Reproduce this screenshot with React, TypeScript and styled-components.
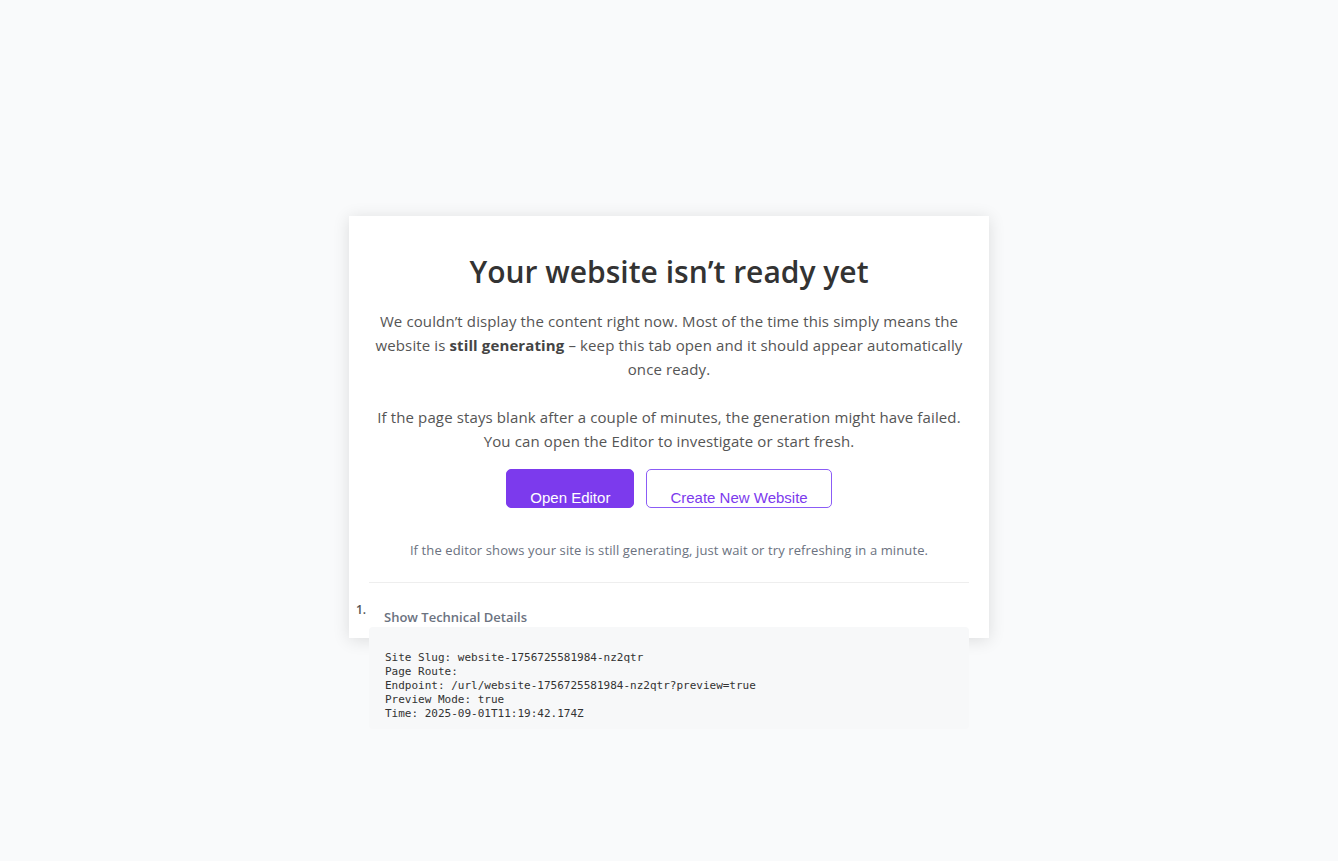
import React from "react";
import styled, { createGlobalStyle } from "styled-components";

const GlobalStyle = createGlobalStyle`
  html, body {
    margin: 0;
    padding: 0;
    background: #f9fafb;
  }
  body {
    font-family: "Open Sans", "Noto Sans", sans-serif;
  }
`;

const Page = styled.div`
  min-height: 100vh;
  box-sizing: border-box;
  padding-bottom: 7px;
  display: flex;
  align-items: center;
  justify-content: center;
`;

const Card = styled.div`
  width: 640px;
  height: 422px;
  box-sizing: border-box;
  background: #ffffff;
  box-shadow: 0 2px 16px rgba(0, 0, 0, 0.12);
  padding: 36px 20px 0;
  display: flex;
  flex-direction: column;
  align-items: stretch;
`;

const Title = styled.h1`
  margin: 0 0 17px;
  font-size: 30px;
  line-height: 40px;
  font-weight: 600;
  color: #333333;
  text-align: center;
`;

const Body = styled.p`
  margin: 0;
  padding: 0;
  font-size: 15px;
  line-height: 24px;
  letter-spacing: 0.12px;
  color: #555555;
  text-align: center;

  & + & {
    margin-top: 24px;
  }

  strong {
    font-weight: 700;
    color: #444444;
  }
`;

const Actions = styled.div`
  display: flex;
  justify-content: center;
  gap: 12px;
  margin-top: 16px;
`;

const Button = styled.button<{ $variant: "primary" | "outline" }>`
  font-family: "Liberation Sans", Arial, sans-serif;
  font-size: 15px;
  line-height: 17px;
  padding: 19px 23px 1px;
  border-radius: 5px;
  cursor: pointer;
  border: 1px solid ${(p) => (p.$variant === "primary" ? "#7c3aed" : "#8b5cf6")};
  background: ${(p) => (p.$variant === "primary" ? "#7c3aed" : "#ffffff")};
  color: ${(p) => (p.$variant === "primary" ? "#ffffff" : "#7c3aed")};
`;

const Note = styled.p`
  margin: 32px 0 0;
  font-size: 13px;
  line-height: 21px;
  letter-spacing: 0.11px;
  color: #6b7280;
  text-align: center;
`;

const Divider = styled.hr`
  margin: 21px 0 0;
  border: none;
  border-top: 1px solid #eeeeee;
`;

const Details = styled.div`
  margin-top: 16px;
`;

const Summary = styled.div`
  display: flex;
  align-items: flex-start;
  margin-left: -13px;
`;

const Marker = styled.span`
  width: 28px;
  flex: none;
  margin-top: 2px;
  font-size: 12px;
  line-height: 18px;
  font-weight: 600;
  color: #555555;
`;

const SummaryLabel = styled.span`
  padding-top: 8px;
  font-size: 13px;
  line-height: 20px;
  font-weight: 600;
  color: #6b7280;
`;

const Pre = styled.pre`
  margin: 0;
  padding: 10px 16px 8px;
  background: #f7f8f9;
  border-radius: 4px;
  font-family: "DejaVu Sans Mono", "Liberation Mono", monospace;
  font-size: 11px;
  line-height: 14px;
  color: #333333;
  white-space: pre;
`;

const details = `
Site Slug: website-1756725581984-nz2qtr
Page Route: 
Endpoint: /url/website-1756725581984-nz2qtr?preview=true
Preview Mode: true
Time: 2025-09-01T11:19:42.174Z`;

export default function App() {
  return (
    <>
      <GlobalStyle />
      <Page>
        <Card>
          <Title>Your website isn’t ready yet</Title>
          <Body>
            We couldn’t display the content right now. Most of the time this simply means the
            website is <strong>still generating</strong> – keep this tab open and it should appear
            automatically once ready.
          </Body>
          <Body>
            If the page stays blank after a couple of minutes, the generation might have failed.
            You can open the Editor to investigate or start fresh.
          </Body>
          <Actions>
            <Button $variant="primary">Open Editor</Button>
            <Button $variant="outline">Create New Website</Button>
          </Actions>
          <Note>
            If the editor shows your site is still generating, just wait or try refreshing in a
            minute.
          </Note>
          <Divider />
          <Details>
            <Summary>
              <Marker>1.</Marker>
              <SummaryLabel>Show Technical Details</SummaryLabel>
            </Summary>
            <Pre>{details}</Pre>
          </Details>
        </Card>
      </Page>
    </>
  );
}
